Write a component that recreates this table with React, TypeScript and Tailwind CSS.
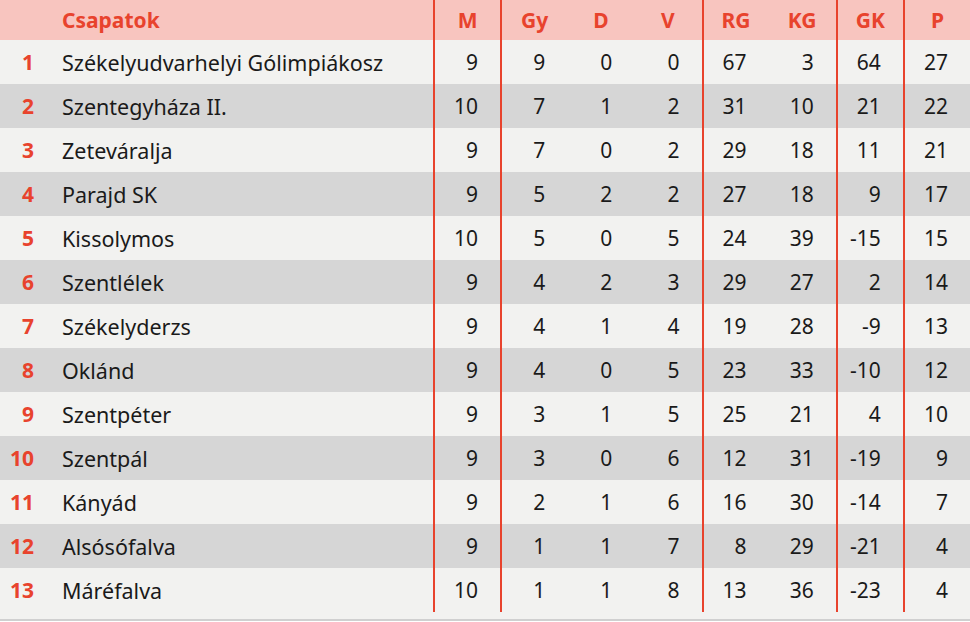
const rows: [number, string, number, number, number, number, number, number, number, number][] = [
  [1, "Székelyudvarhelyi Gólimpiákosz", 9, 9, 0, 0, 67, 3, 64, 27],
  [2, "Szentegyháza II.", 10, 7, 1, 2, 31, 10, 21, 22],
  [3, "Zeteváralja", 9, 7, 0, 2, 29, 18, 11, 21],
  [4, "Parajd SK", 9, 5, 2, 2, 27, 18, 9, 17],
  [5, "Kissolymos", 10, 5, 0, 5, 24, 39, -15, 15],
  [6, "Szentlélek", 9, 4, 2, 3, 29, 27, 2, 14],
  [7, "Székelyderzs", 9, 4, 1, 4, 19, 28, -9, 13],
  [8, "Oklánd", 9, 4, 0, 5, 23, 33, -10, 12],
  [9, "Szentpéter", 9, 3, 1, 5, 25, 21, 4, 10],
  [10, "Szentpál", 9, 3, 0, 6, 12, 31, -19, 9],
  [11, "Kányád", 9, 2, 1, 6, 16, 30, -14, 7],
  [12, "Alsósófalva", 9, 1, 1, 7, 8, 29, -21, 4],
  [13, "Máréfalva", 10, 1, 1, 8, 13, 36, -23, 4],
];

const headers = ["M", "Gy", "D", "V", "RG", "KG", "GK", "P"];
// columns that get the red divider on their left
const divided = [0, 1, 4, 6, 7];

const grid = "grid grid-cols-[56px_377px_repeat(8,minmax(0,1fr))]";

export default function App() {
  return (
    <div
      className="w-[970px] bg-[#f2f2f0] pb-[7px] border-b-2 border-[#d0d0d0]"
      style={{ fontFamily: '"Noto Sans", "Open Sans", sans-serif' }}
    >
      {/* Header */}
      <div className={`${grid} h-10 bg-[#f8c5bf] text-[21px] font-bold text-[#e8432d]`}>
        <div />
        <div className="flex items-center pl-[6px] pt-[2px]">Csapatok</div>
        {headers.map((h, i) => (
          <div
            key={h}
            className={`flex items-center justify-center pt-[2px] ${
              divided.includes(i) ? "border-l-2 border-[#e8432d]" : ""
            }`}
          >
            {h}
          </div>
        ))}
      </div>

      {/* Rows */}
      {rows.map((r, idx) => {
        const [rank, name, ...stats] = r;
        return (
          <div
            key={rank}
            className={`${grid} h-11 text-[21px] text-[#1a1a1a] ${
              idx % 2 === 1 ? "bg-[#d6d6d6]" : "bg-[#f2f2f0]"
            }`}
          >
            <div className="flex items-center justify-end pr-[22px] pt-[2px] font-bold text-[#e8432d]">
              {rank}
            </div>
            <div className="flex items-center pl-[6px] pt-[2px] whitespace-nowrap text-[21.5px]">
              {name}
            </div>
            {stats.map((v, i) => (
              <div
                key={i}
                className={`flex items-center justify-end pr-[22px] pt-[2px] ${
                  divided.includes(i) ? "border-l-2 border-[#e8432d]" : ""
                }`}
              >
                {v}
              </div>
            ))}
          </div>
        );
      })}
    </div>
  );
}
